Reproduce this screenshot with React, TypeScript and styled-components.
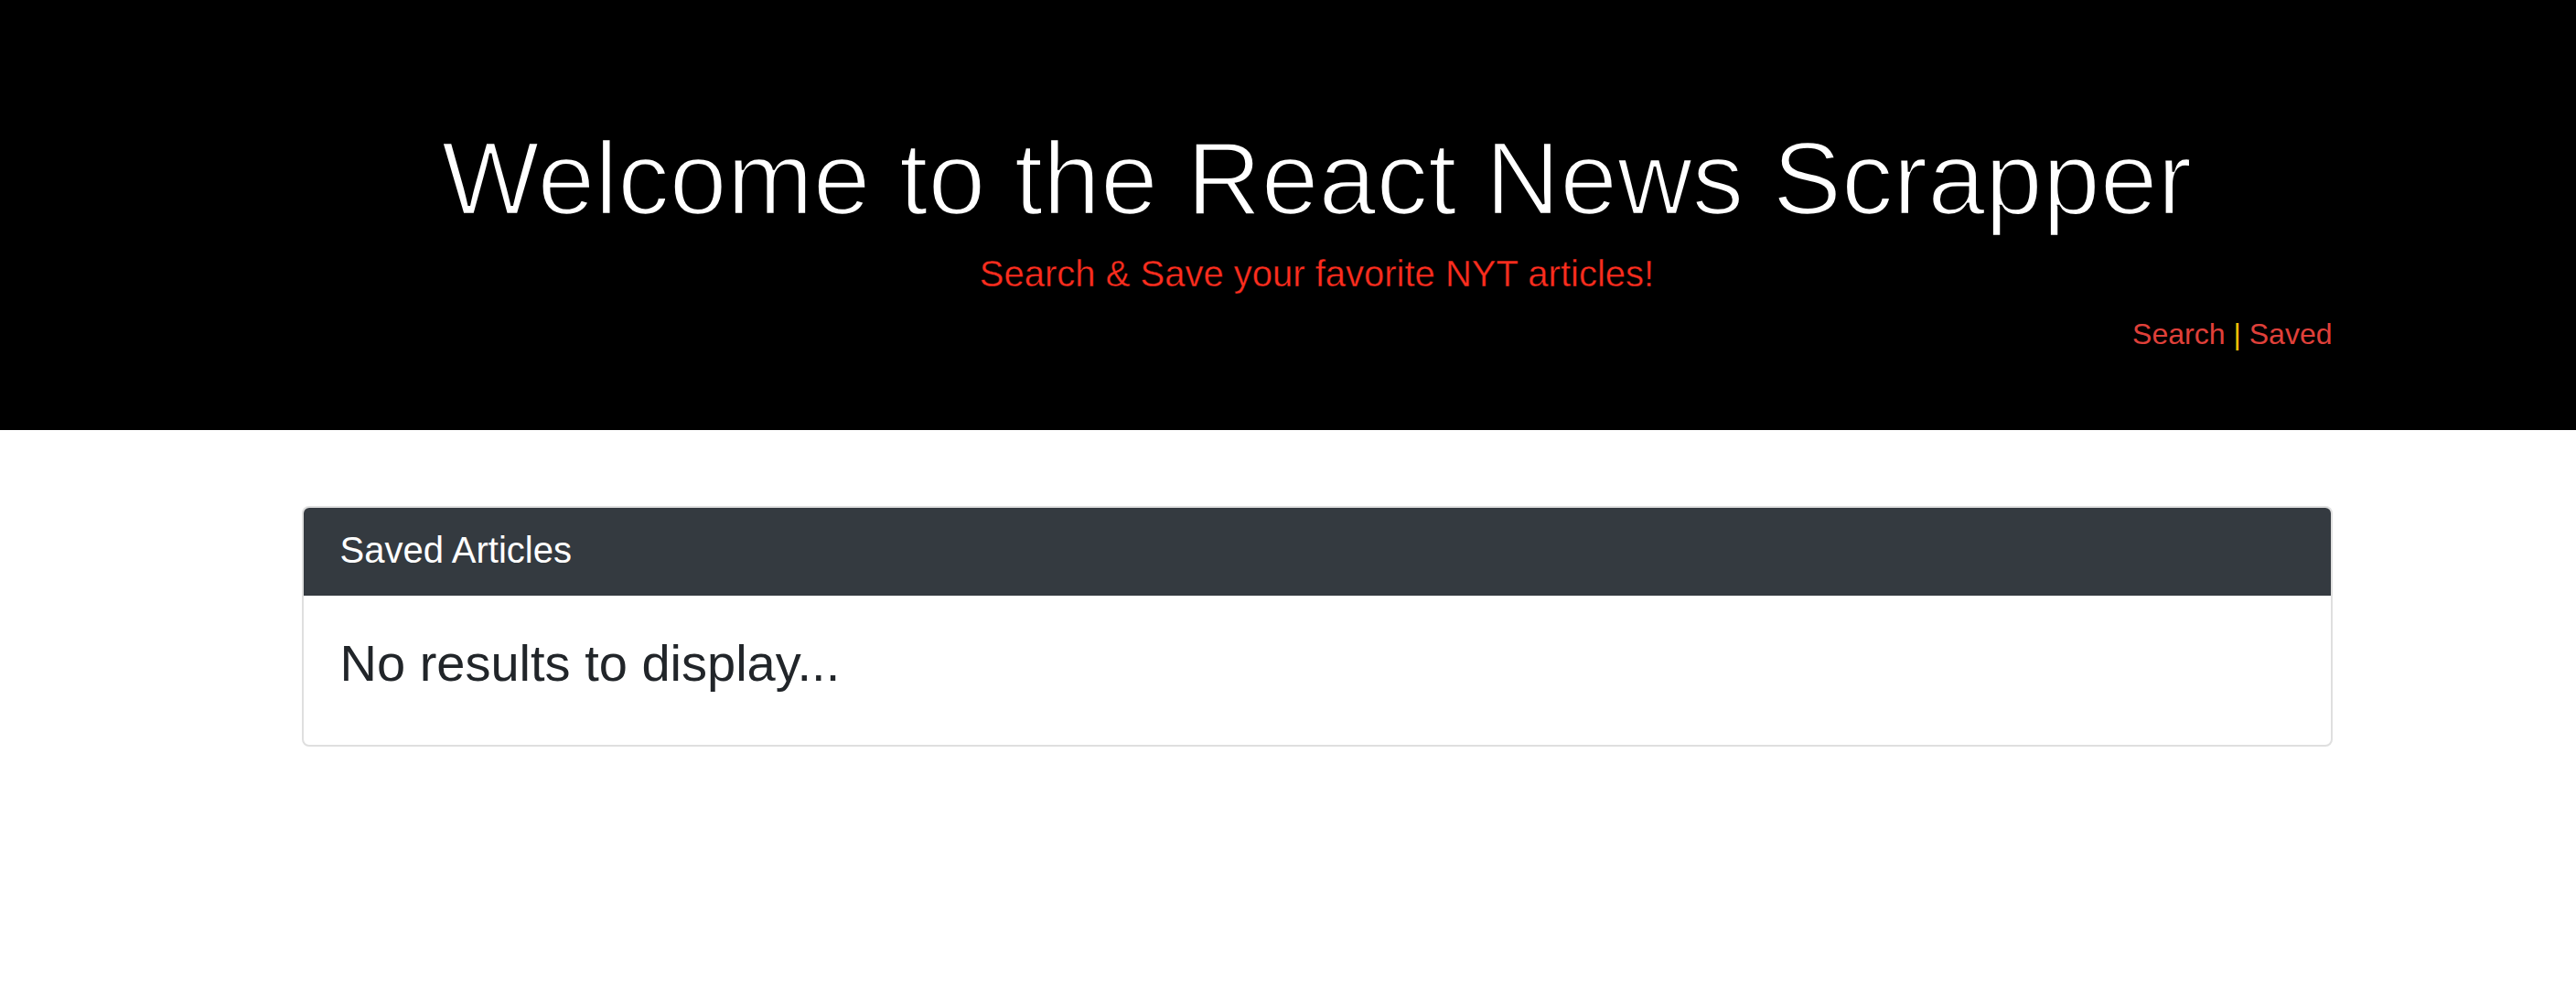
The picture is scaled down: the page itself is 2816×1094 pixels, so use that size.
import React from "react";
import styled, { createGlobalStyle } from "styled-components";

const Global = createGlobalStyle`
  html, body { margin: 0; padding: 0; background: #ffffff; }
  body {
    font-family: "Liberation Sans", Arial, Helvetica, sans-serif;
    color: #212529;
    -webkit-font-smoothing: antialiased;
  }
  * { box-sizing: border-box; }
`;

const Jumbotron = styled.header`
  background: #000000;
  height: 470px;
  padding: 128px 0 0 63px;
`;

const Container = styled.div`
  max-width: 2220px;
  margin: 0 auto;
`;

const Title = styled.h1`
  margin: 0 0 7px;
  text-align: center;
  color: #ffffff;
  font-size: 113px;
  font-weight: 300;
  line-height: 1.19;
  -webkit-text-stroke: 2.6px #000000;
`;

const Lead = styled.p`
  margin: 0;
  text-align: center;
  color: #ff2d1e;
  font-size: 40px;
  font-weight: 300;
  line-height: 1.5;
  -webkit-text-stroke: 0.4px #000000;
`;

const Nav = styled.nav`
  display: flex;
  justify-content: flex-end;
  align-items: baseline;
  gap: 9px;
  margin-top: 12px;
  font-size: 32px;
  line-height: 1.5;
`;

const NavLink = styled.a`
  color: #e0403a;
  text-decoration: none;
`;

const Sep = styled.span`
  color: #ffc107;
`;

const Main = styled.main`
  padding: 83px 0 0 63px;
`;

const Card = styled.section`
  border: 2px solid rgba(0, 0, 0, 0.125);
  border-radius: 8px;
  overflow: hidden;
  background: #ffffff;
`;

const CardHeader = styled.div`
  background: #343a40;
  color: #ffffff;
  padding: 22px 40px 26px;
`;

const CardTitle = styled.h5`
  margin: 0;
  font-size: 40px;
  font-weight: 400;
  line-height: 1.2;
`;

const CardBody = styled.div`
  padding: 40px;
`;

const Empty = styled.h3`
  margin: 0 0 16px;
  font-size: 56px;
  font-weight: 400;
  line-height: 1.2;
  color: #212529;
`;

export default function App() {
  return (
    <>
      <Global />
      <Jumbotron>
        <Container>
          <Title>Welcome to the React News Scrapper</Title>
          <Lead>Search &amp; Save your favorite NYT articles!</Lead>
          <Nav>
            <NavLink href="#">Search</NavLink>
            <Sep>|</Sep>
            <NavLink href="#">Saved</NavLink>
          </Nav>
        </Container>
      </Jumbotron>
      <Main>
        <Container>
          <Card>
            <CardHeader>
              <CardTitle>Saved Articles</CardTitle>
            </CardHeader>
            <CardBody>
              <Empty>No results to display...</Empty>
            </CardBody>
          </Card>
        </Container>
      </Main>
    </>
  );
}
